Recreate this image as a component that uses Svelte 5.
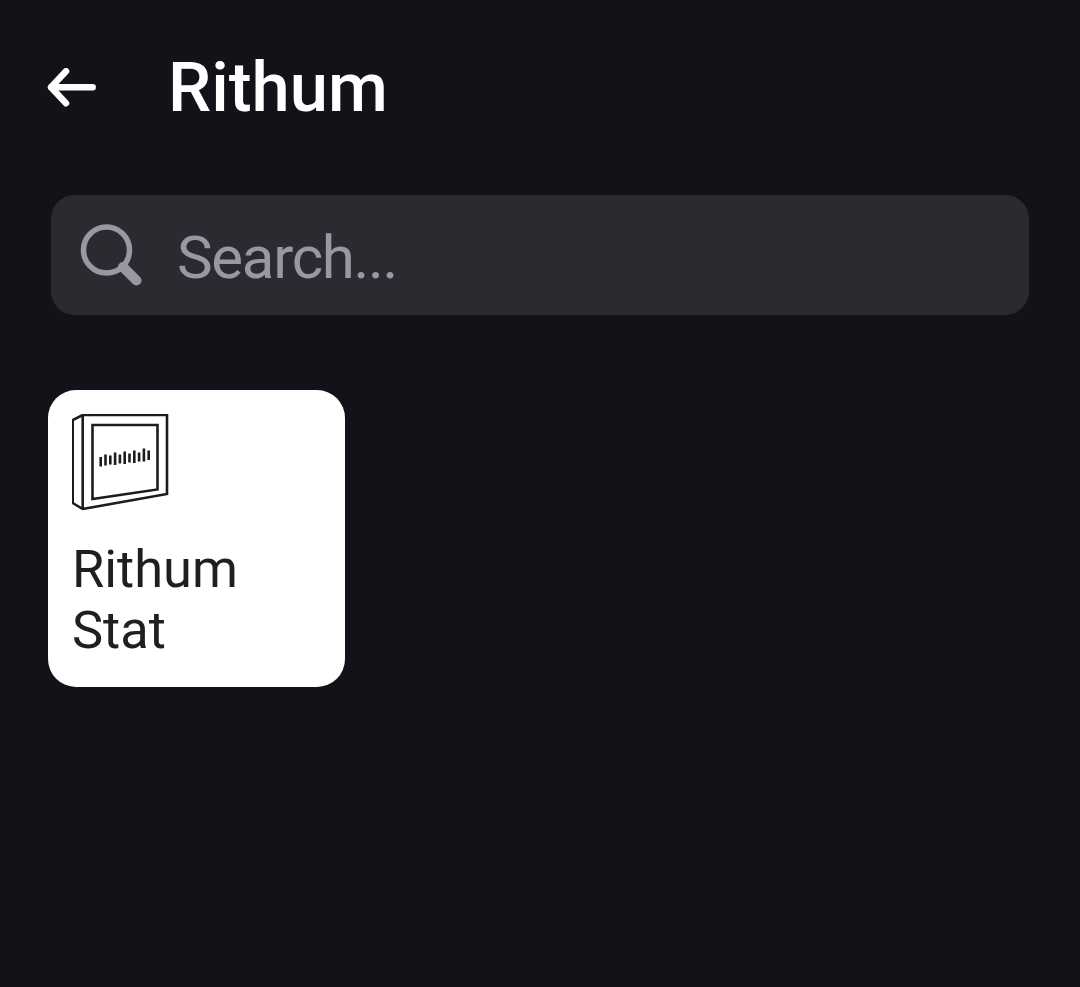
<script>
  const bars = [
    [0, 457, 466.5], [4.8, 454.5, 465.5], [9.6, 455.5, 464.5], [14.4, 452.5, 465], [19.2, 454.5, 463.5],
    [24, 451.5, 464], [28.8, 453.5, 462.5], [33.6, 450.5, 463], [38.4, 452.5, 461.5], [43.2, 448.5, 461.5], [48, 450.5, 460]
  ];
</script>

<div class="page">
  <header class="header">
    <svg class="back" viewBox="0 0 50 40" width="50" height="40" aria-hidden="true">
      <path d="M45.7 19.2H4M19 3.2L4 19.2L19 35.2" />
    </svg>
    <h1>Rithum</h1>
  </header>

  <div class="search">
    <svg class="glass" viewBox="0 0 62 62" width="62" height="62" aria-hidden="true">
      <circle cx="26.5" cy="26" r="23" />
      <path class="handle" d="M43 43L56.5 56.5" />
    </svg>
    <span class="placeholder">Search...</span>
  </div>

  <div class="grid">
    <div class="card">
      <svg class="logo" viewBox="72 414 97 97" width="97" height="97" aria-hidden="true">
        <path d="M82.7 415H167V494L82.7 509L72.7 503V420L82.7 415V509" />
        <path d="M92.5 425H157.5V489.5L92.5 499Z" />
        {#each bars as b}
          <path class="bar" d="M{100.7 + b[0]} {b[1]}V{b[2]}" />
        {/each}
      </svg>
      <div class="name">Rithum Stat</div>
    </div>
  </div>
</div>

<style>
  :global(body) {
    margin: 0;
    background: #121319;
  }
  .page {
    height: 987px;
    background: #121319;
    font-family: Roboto, "Liberation Sans", sans-serif;
    overflow: hidden;
  }
  .header {
    display: flex;
    align-items: center;
    height: 175px;
    padding-left: 47px;
    box-sizing: border-box;
    gap: 71px;
  }
  .back {
    flex: none;
    fill: none;
    stroke: #fff;
    stroke-width: 6.5;
    stroke-linecap: round;
    stroke-linejoin: round;
  }
  h1 {
    margin: 0;
    color: #fff;
    font-size: 68.7px;
    font-weight: 500;
    line-height: 80px;
  }
  .search {
    display: flex;
    align-items: center;
    gap: 35px;
    height: 120px;
    margin: 20px 51px 0;
    padding-left: 29px;
    background: #2a2b31;
    border-radius: 24px;
  }
  .glass {
    fill: none;
    stroke: #9898a3;
    stroke-width: 5.5;
    stroke-linecap: round;
    flex: none;
  }
  .glass .handle {
    stroke-width: 10;
  }
  .placeholder {
    color: #9898a3;
    font-size: 60px;
    letter-spacing: -1.3px;
    line-height: 68px;
    padding-top: 6px;
  }
  .grid {
    margin: 75px 48px 0;
  }
  .card {
    box-sizing: border-box;
    width: 297px;
    height: 297px;
    padding: 24px 24px 0 24px;
    background: #fff;
    border-radius: 28px;
  }
  .logo {
    display: block;
    fill: none;
    stroke: #1c1c1e;
    stroke-width: 2.6;
    stroke-linejoin: miter;
  }
  .logo .bar {
    stroke-width: 2.6;
  }
  .name {
    margin-top: 28px;
    color: #1f1f21;
    font-size: 52.4px;
    line-height: 61px;
    width: 200px;
  }
</style>
